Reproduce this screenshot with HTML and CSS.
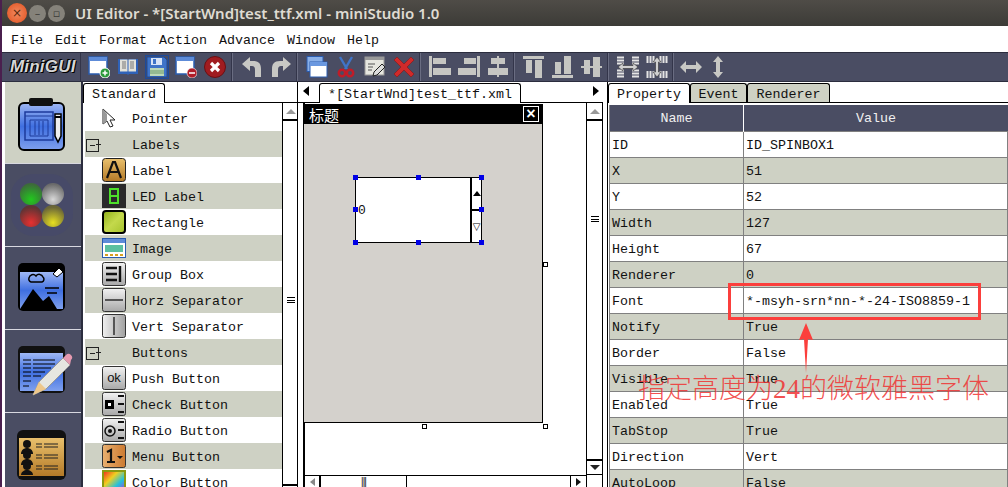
FILE: index.html
```html
<!DOCTYPE html>
<html lang="en">
<head>
<meta charset="utf-8">
<title>UI Editor - miniStudio</title>
<link rel="stylesheet" href="styles.css">
</head>
<body>
<svg class="defs" width="0" height="0" aria-hidden="true">
  <defs>
    <linearGradient id="gBlue" x1="0" y1="0" x2="0" y2="1"><stop offset="0" stop-color="#9fb8f5"/><stop offset=".5" stop-color="#3f6fe0"/><stop offset="1" stop-color="#7fa0ee"/></linearGradient>
    <linearGradient id="gOrange" x1="0" y1="0" x2="0" y2="1"><stop offset="0" stop-color="#e9c06c"/><stop offset="1" stop-color="#b47a28"/></linearGradient>
    <linearGradient id="gGray" x1="0" y1="0" x2="0" y2="1"><stop offset="0" stop-color="#f2f2f2"/><stop offset="1" stop-color="#a8a8a8"/></linearGradient>
    <linearGradient id="gGrayH" x1="0" y1="0" x2="1" y2="0"><stop offset="0" stop-color="#f0f0f0"/><stop offset="1" stop-color="#a0a0a0"/></linearGradient>
    <linearGradient id="gLime" x1="0" y1="0" x2="1" y2="1"><stop offset="0" stop-color="#8fae18"/><stop offset=".5" stop-color="#c4d94c"/><stop offset="1" stop-color="#a5c22c"/></linearGradient>
    <linearGradient id="gMenu" x1="0" y1="0" x2="1" y2="0"><stop offset="0" stop-color="#e8b070"/><stop offset="1" stop-color="#cc7a30"/></linearGradient>
    <linearGradient id="gRain" x1="0" y1="0" x2="1" y2="1"><stop offset="0" stop-color="#f02020"/><stop offset=".35" stop-color="#f0d020"/><stop offset=".65" stop-color="#20c0e0"/><stop offset="1" stop-color="#d020d0"/></linearGradient>
    <radialGradient id="lG" cx=".5" cy=".75" r=".7"><stop offset="0" stop-color="#22c81e"/><stop offset="1" stop-color="#3d6a3a"/></radialGradient>
    <radialGradient id="lW" cx=".5" cy=".75" r=".7"><stop offset="0" stop-color="#d8d8d8"/><stop offset="1" stop-color="#6a6a6a"/></radialGradient>
    <radialGradient id="lR" cx=".5" cy=".8" r=".7"><stop offset="0" stop-color="#e83030"/><stop offset="1" stop-color="#5e3434"/></radialGradient>
    <radialGradient id="lY" cx=".5" cy=".8" r=".7"><stop offset="0" stop-color="#e8e020"/><stop offset="1" stop-color="#6a6638"/></radialGradient>
  </defs>
</svg>
<div class="window">
  <header class="titlebar">
    <span class="dot dot-close">×</span>
    <span class="dot dot-min">–</span>
    <span class="dot dot-max">▫</span>
    <span class="title">UI Editor - *[StartWnd]test_ttf.xml - miniStudio 1.0</span>
  </header>
  <nav class="menubar">
    <span>File</span><span>Edit</span><span>Format</span><span>Action</span><span>Advance</span><span>Window</span><span>Help</span>
  </nav>
  <div class="toolbar">
    <div class="logo">MiniGUI</div>
    <div class="group g-first">
      <span class="tb"><svg width="22" height="22" viewBox="0 0 22 22"><rect x="1" y="1" width="18" height="17" fill="#fff" stroke="#2a5cb0" stroke-width="1.5"/><rect x="1" y="1" width="18" height="4" fill="#5d8bd8"/><circle cx="17" cy="17" r="5" fill="#2a9a3a" stroke="#fff"/><path d="M14.500 17h5M17 14.500v5" stroke="#fff" stroke-width="1.500"/></svg></span>
      <span class="tb"><svg width="22" height="22" viewBox="0 0 22 22"><path d="M1 3h9l1 1 1-1h9v15h-9l-1 1-1-1H1z" fill="#2f62b8"/><path d="M3 3.500h7.500v12H3zM11.500 3.500H19v12h-7.500z" fill="#e2e2da"/><path d="M5 6h4M5 8h4M5 10h4M5 12h4M13 6h4M13 8h4M13 10h4M13 12h4" stroke="#777"/></svg></span>
      <span class="tb tb-on"><svg width="22" height="22" viewBox="0 0 22 22"><path d="M1 1h17l3 3v17H1z" fill="#3f74c8" stroke="#1e4a98"/><rect x="5" y="2" width="11" height="7" fill="#d8e4f6"/><rect x="7" y="3" width="3" height="5" fill="#3f74c8"/><rect x="4" y="12" width="14" height="8" fill="#bcd8b8"/><path d="M4 15h14M4 17h14" stroke="#6a9a6a"/></svg></span>
      <span class="tb"><svg width="22" height="22" viewBox="0 0 22 22"><rect x="1" y="1" width="18" height="17" fill="#fff" stroke="#2a5cb0" stroke-width="1.5"/><rect x="1" y="1" width="18" height="4" fill="#5d8bd8"/><circle cx="17" cy="17" r="5" fill="#b01c28" stroke="#fff" stroke-width=".6"/><path d="M14 17h6" stroke="#fff" stroke-width="1.500"/></svg></span>
      <span class="tb"><svg width="22" height="22" viewBox="0 0 22 22"><circle cx="11" cy="11" r="10.500" fill="#a01c20" stroke="#6a1014"/><path d="M7 7l8 8M15 7l-8 8" stroke="#fff" stroke-width="3.200"/></svg></span>
    </div>
    <div class="group">
      <span class="tb"><svg width="22" height="22" viewBox="0 0 22 22"><path d="M1 8l8-7v4h3c6 0 8 3 8 8v8h-6v-7c0-3-1-4-3-4H9v5z" fill="#c8c8c4"/></svg></span>
      <span class="tb"><svg width="22" height="22" viewBox="0 0 22 22"><path d="M21 8l-8-7v4h-3C4 5 2 8 2 13v8h6v-7c0-3 1-4 3-4h2v5z" fill="#c8c8c4"/></svg></span>
    </div>
    <div class="group">
      <span class="tb"><svg width="22" height="22" viewBox="0 0 22 22"><rect x="1" y="0.500" width="16" height="15" fill="#8ab0e8" stroke="#2a5cb0"/><rect x="4" y="6" width="17" height="15" fill="#fff" stroke="#2a5cb0"/><rect x="4" y="6" width="17" height="4" fill="#6a98e0"/></svg></span>
      <span class="tb"><svg width="22" height="22" viewBox="0 0 22 22"><path d="M5 1l7 12M17 1l-7 12" stroke="#3f74c8" stroke-width="2.400"/><circle cx="7" cy="17" r="3.200" fill="none" stroke="#c01c28" stroke-width="2.500"/><circle cx="15" cy="17" r="3.200" fill="none" stroke="#c01c28" stroke-width="2.500"/></svg></span>
      <span class="tb"><svg width="22" height="22" viewBox="0 0 22 22"><rect x="1" y="1" width="19" height="18" fill="#e6e6e0" stroke="#999"/><rect x="1" y="1" width="19" height="3" fill="#999"/><path d="M4 8h7M4 11h5M4 14h4" stroke="#555"/><path d="M9 20l1-4 8-8 3 3-8 8z" fill="#ddd" stroke="#222"/></svg></span>
      <span class="tb"><svg width="22" height="22" viewBox="0 0 22 22"><path d="M1 4l3-3 7 7 7-7 3 3-7 7 7 7-3 3-7-7-7 7-3-3 7-7z" fill="#d02a2a" stroke="#8a1616" stroke-width=".6"/></svg></span>
    </div>
    <div class="group">
      <span class="tb"><svg class="al" width="22" height="22" viewBox="0 0 22 22"><rect x="0" y="0" width="3" height="21"/><rect x="4" y="2" width="13" height="6"/><rect x="4" y="12" width="18" height="7"/></svg></span>
      <span class="tb"><svg class="al" width="22" height="22" viewBox="0 0 22 22"><rect x="19" y="0" width="3" height="21"/><rect x="6" y="2" width="12" height="6"/><rect x="0" y="12" width="18" height="7"/></svg></span>
      <span class="tb"><svg class="al" width="22" height="22" viewBox="0 0 22 22"><rect x="10" y="0" width="2" height="21"/><rect x="4" y="2" width="14" height="6"/><rect x="1" y="12" width="20" height="7"/></svg></span>
    </div>
    <div class="group">
      <span class="tb"><svg class="al" width="22" height="22" viewBox="0 0 22 22"><rect x="0" y="0" width="21" height="3"/><rect x="3" y="4" width="6" height="13"/><rect x="12" y="4" width="7" height="18"/></svg></span>
      <span class="tb"><svg class="al" width="22" height="22" viewBox="0 0 22 22"><rect x="0" y="19" width="21" height="3"/><rect x="3" y="6" width="6" height="12"/><rect x="12" y="0" width="7" height="18"/></svg></span>
      <span class="tb"><svg class="al" width="22" height="22" viewBox="0 0 22 22"><rect x="0" y="10" width="21" height="2"/><rect x="3" y="4" width="6" height="14"/><rect x="12" y="1" width="7" height="20"/></svg></span>
    </div>
    <div class="group">
      <span class="tb"><svg width="22" height="22" viewBox="0 0 22 22"><path d="M0 1.500h7M0 4.500h7M0 7.500h7M0 14.500h7M0 17.500h7M0 20.500h7M15 1.500h7M15 4.500h7M15 7.500h7M15 14.500h7M15 17.500h7M15 20.500h7" stroke="#e4e4e4" stroke-width="2"/><path d="M1 11l5-4v2.500h10V7l5 4-5 4v-2.500H6V15z" fill="#d0d0d0" stroke="#333" stroke-width=".6"/></svg></span>
      <span class="tb"><svg width="22" height="22" viewBox="0 0 22 22"><path d="M1.500 0v7M4.500 0v7M7.500 0v7M14.500 0v7M17.500 0v7M20.500 0v7M1.500 15v7M4.500 15v7M7.500 15v7M14.500 15v7M17.500 15v7M20.500 15v7" stroke="#e4e4e4" stroke-width="2"/><path d="M11 1l4 5h-2.500v10H15l-4 5-4-5h2.500V6H7z" fill="#d0d0d0" stroke="#333" stroke-width=".6"/></svg></span>
    </div>
    <div class="group g-last">
      <span class="tb tb-narrow"><svg width="22" height="22" viewBox="0 0 22 22"><path d="M0 11l6-6v4h10V5l6 6-6 6v-4H6v4z" fill="#c8c8c4"/></svg></span>
      <span class="tb tb-narrow"><svg width="22" height="22" viewBox="0 0 22 22"><path d="M11 0l5 6h-3v10h3l-5 6-5-6h3V6H6z" fill="#c8c8c4"/></svg></span>
    </div>
  </div>
  <div class="main">
    <aside class="sidebar">
      <div class="side-item side-on"><svg width="50" height="56" viewBox="0 0 50 56"><rect x="2" y="6" width="45" height="47" rx="5" fill="url(#gBlue)" stroke="#000" stroke-width="2"/><rect x="12" y="1" width="24" height="8" rx="2" fill="#111"/><rect x="8" y="15" width="28" height="28" fill="none" stroke="#1c3a9a" stroke-width="1.500"/><path d="M8 19h28M13 23v16h18V23zM18 24v14M22 24v14M26 24v14" fill="none" stroke="#1c3a9a"/><path d="M38 17h6v22l-3 6-3-6z" fill="#eee" stroke="#000" stroke-width="1.500"/><path d="M38 20h6" stroke="#000" stroke-width="2"/></svg></div>
      <div class="side-item"><svg width="62" height="62" viewBox="0 0 62 62"><rect x="0" y="0" width="62" height="62" rx="22" fill="#474a68"/><circle cx="20" cy="20" r="11" fill="url(#lG)"/><circle cx="42" cy="20" r="11" fill="url(#lW)"/><circle cx="20" cy="42" r="11" fill="url(#lR)"/><circle cx="42" cy="42" r="11" fill="url(#lY)"/></svg></div>
      <div class="side-item"><svg width="50" height="52" viewBox="0 0 50 52"><rect x="1" y="1" width="47" height="48" rx="5" fill="#000"/><rect x="3" y="10" width="43" height="37" fill="url(#gBlue)"/><path d="M3 47l13-20 10 12 6-5 8 13z" fill="#000"/><path d="M12 16a4 4 0 0 1 7-2 4 4 0 0 1 7 1 3 3 0 0 1-1 5H14a3 3 0 0 1-2-4z" fill="none" stroke="#000" stroke-width="1.500"/><path d="M28 26h14M30 31h10" stroke="#000" stroke-width="1.500"/><path d="M36 12l6-6 4 4-6 5z" fill="#fff" stroke="#000"/></svg></div>
      <div class="side-item side-note"><svg width="56" height="52" viewBox="0 0 56 52"><rect x="1" y="1" width="47" height="47" rx="5" fill="#111"/><rect x="3" y="8" width="43" height="38" fill="url(#gBlue)"/><path d="M6 15h8M16 15h22M6 19h8M16 19h22M6 23h8M16 23h18M6 27h8M16 27h12M6 31h8M16 31h8M6 36h8M6 41h6" stroke="#000" stroke-width="1.200"/><path d="M16 50l6-13 24-24 7 7-24 24z" fill="#e6e6e0" stroke="#999"/><path d="M46 13l3-3a3 3 0 0 1 5 5l-1 5z" fill="#e59ab0"/><path d="M16 50l6-13 7 7z" fill="#eec78a"/></svg></div>
      <div class="side-item"><svg width="52" height="52" viewBox="0 0 52 52"><rect x="1" y="1" width="49" height="50" rx="6" fill="#111"/><rect x="3" y="9" width="45" height="38" fill="url(#gOrange)"/><g fill="#111"><circle cx="11" cy="15" r="4"/><path d="M5 25c0-4 3-6 6-6s6 2 6 6z"/><circle cx="11" cy="26" r="4"/><path d="M5 36c0-4 3-6 6-6s6 2 6 6z"/><circle cx="11" cy="37" r="4"/><path d="M5 46c0-3 3-5 6-5s6 2 6 5z"/></g><path d="M20 15h6M28 15h14M20 18h6M28 18h14M20 26h6M28 26h14M20 29h6M28 29h14M20 37h6M28 37h14M20 40h6M28 40h14" stroke="#222" stroke-width="1.200"/></svg></div>
    </aside>

    <section class="palette">
      <div class="tabstrip tabstrip-pal"><span class="tab tab-on tab-std">Standard</span></div>
      <div class="pane">
        <div class="list">
          <div class="row"><span class="ic"><svg width="14" height="20" viewBox="0 0 14 20"><path d="M1 1v15l4-3 3 6 3-1-3-6h5z" fill="#fff" stroke="#222"/><path d="M1 1v15l4-3V6z" fill="#999"/></svg></span>Pointer</div>
          <div class="row alt"><span class="ic"><i class="tree"></i></span>Labels</div>
          <div class="row"><span class="ic"><svg class="pi" width="24" height="24" viewBox="0 0 24 24"><rect x=".5" y=".5" width="23" height="23" rx="3" fill="url(#gOrange)" stroke="#222"/><path d="M5 20L11 4h2l6 16M8 14h8" fill="none" stroke="#111" stroke-width="2.200"/></svg></span>Label</div>
          <div class="row alt"><span class="ic"><svg class="pi" width="24" height="24" viewBox="0 0 24 24"><rect width="24" height="24" fill="#2a2a2a"/><path d="M8 5h8v14H8zM8 12h8" fill="none" stroke="#4de02a" stroke-width="2"/></svg></span>LED Label</div>
          <div class="row"><span class="ic"><svg class="pi" width="24" height="24" viewBox="0 0 24 24"><rect x="1" y="1" width="22" height="22" rx="3" fill="url(#gLime)" stroke="#000" stroke-width="2"/></svg></span>Rectangle</div>
          <div class="row alt"><span class="ic"><svg class="pi" width="24" height="20" viewBox="0 0 24 20"><rect x=".5" y=".5" width="23" height="19" fill="#fff" stroke="#2a5cb0"/><rect x="1" y="1" width="22" height="4" fill="#5d8bd8"/><rect x="3" y="7" width="18" height="7" fill="#5cc0a0"/><path d="M3 17h3M8 17h3M13 17h3M18 17h3" stroke="#d8a020" stroke-width="2"/></svg></span>Image</div>
          <div class="row"><span class="ic"><svg class="pi" width="24" height="24" viewBox="0 0 24 24"><rect x=".5" y=".5" width="23" height="23" rx="2" fill="url(#gGray)" stroke="#333"/><path d="M4 6h11M4 12h11M4 18h11M18 4v16" stroke="#111" stroke-width="2.400"/></svg></span>Group Box</div>
          <div class="row alt"><span class="ic"><svg class="pi" width="24" height="24" viewBox="0 0 24 24"><rect x=".5" y=".5" width="23" height="23" rx="2" fill="url(#gGray)" stroke="#333"/><path d="M3 12h18" stroke="#555" stroke-width="2"/></svg></span>Horz Separator</div>
          <div class="row"><span class="ic"><svg class="pi" width="24" height="24" viewBox="0 0 24 24"><rect x=".5" y=".5" width="23" height="23" rx="2" fill="url(#gGrayH)" stroke="#333"/><path d="M12 3v18" stroke="#555" stroke-width="2"/></svg></span>Vert Separator</div>
          <div class="row alt"><span class="ic"><i class="tree"></i></span>Buttons</div>
          <div class="row"><span class="ic"><svg class="pi" width="24" height="24" viewBox="0 0 24 24"><rect x=".5" y=".5" width="23" height="23" rx="2" fill="url(#gGray)" stroke="#333"/><text x="12" y="16" text-anchor="middle" class="ok">ok</text></svg></span>Push Button</div>
          <div class="row alt"><span class="ic"><svg class="pi" width="24" height="24" viewBox="0 0 24 24"><rect x=".5" y=".5" width="23" height="23" rx="2" fill="url(#gGray)" stroke="#333"/><rect x="3" y="8" width="9" height="9" fill="#000"/><rect x="6" y="11" width="3" height="3" fill="#fff"/><path d="M16 4h6M16 12h6M16 20h6" stroke="#111" stroke-width="2"/></svg></span>Check Button</div>
          <div class="row"><span class="ic"><svg class="pi" width="24" height="24" viewBox="0 0 24 24"><rect x=".5" y=".5" width="23" height="23" rx="2" fill="url(#gGray)" stroke="#333"/><circle cx="8" cy="13" r="5" fill="none" stroke="#111" stroke-width="1.500"/><circle cx="8" cy="13" r="2" fill="#111"/><path d="M16 4h6M16 12h6M16 20h6" stroke="#111" stroke-width="2"/></svg></span>Radio Button</div>
          <div class="row alt"><span class="ic"><svg class="pi" width="24" height="24" viewBox="0 0 24 24"><rect x=".5" y=".5" width="23" height="23" rx="2" fill="url(#gMenu)" stroke="#333"/><path d="M5 8l4-2v12M5 18h8" fill="none" stroke="#111" stroke-width="2.200"/><path d="M15 12h6l-3 3z" fill="#111"/></svg></span>Menu Button</div>
          <div class="row"><span class="ic"><svg class="pi" width="24" height="24" viewBox="0 0 24 24"><rect x="1" y="1" width="22" height="22" fill="url(#gRain)" stroke="#8a9a10" stroke-width="2"/></svg></span>Color Button</div>
        </div>
        <div class="vscroll"><span class="btn-up"></span><span class="grip"></span><span class="btn-down"></span></div>
      </div>
    </section>

    <section class="editor">
      <div class="tabstrip tabstrip-ed"><span class="arrow-l"></span><span class="tab tab-on tab-file">*[StartWnd]test_ttf.xml</span><span class="arrow-r"></span></div>
      <div class="ed-pane">
        <div class="ed-col">
          <div class="canvas">
            <div class="form">
              <div class="form-title"><span class="cjk">标题</span><span class="close-x">×</span></div>
              <div class="spin">
                <div class="spin-val">0</div>
                <div class="spin-btns"><span class="spin-up"></span><span class="spin-dn"></span></div>
                <i class="h h1"></i><i class="h h2"></i><i class="h h3"></i><i class="h h4"></i><i class="h h5"></i><i class="h h6"></i><i class="h h7"></i><i class="h h8"></i>
              </div>
              <i class="s s1"></i><i class="s s2"></i><i class="s s3"></i>
            </div>
          </div>
          <div class="hscroll"><span class="hb-l"></span><span class="hb-thumb"><b>|||</b></span><span class="hb-track"></span><span class="hb-r"></span></div>
        </div>
        <div class="vscroll vscroll-ed"><span class="btn-up"></span><span class="grip grip-ed"></span><span class="btn-down"></span></div>
      </div>
    </section>

    <section class="props">
      <div class="tabstrip tabstrip-pr"><span class="tab tab-on tab-prop">Property</span><span class="tab tab-ev">Event</span><span class="tab tab-rn">Renderer</span></div>
      <div class="ptable">
        <div class="phead"><span>Name</span><span>Value</span></div>
        <div class="prow"><span>ID</span><span>ID_SPINBOX1</span></div>
        <div class="prow alt"><span>X</span><span>51</span></div>
        <div class="prow"><span>Y</span><span>52</span></div>
        <div class="prow alt"><span>Width</span><span>127</span></div>
        <div class="prow"><span>Height</span><span>67</span></div>
        <div class="prow alt"><span>Renderer</span><span>0</span></div>
        <div class="prow"><span>Font</span><span>*-msyh-srn*nn-*-24-ISO8859-1</span></div>
        <div class="prow alt"><span>Notify</span><span>True</span></div>
        <div class="prow"><span>Border</span><span>False</span></div>
        <div class="prow alt"><span>Visible</span><span>True</span></div>
        <div class="prow"><span>Enabled</span><span>True</span></div>
        <div class="prow alt"><span>TabStop</span><span>True</span></div>
        <div class="prow"><span>Direction</span><span>Vert</span></div>
        <div class="prow alt"><span>AutoLoop</span><span>False</span></div>
      </div>
    </section>
  </div>
  <div class="note-box"></div>
  <svg class="note-arrow" width="16" height="50" viewBox="0 0 16 50"><path d="M8 0l7 17-5-1-2 34-2-34-5 1z" fill="#fb3f3c"/></svg>
  <div class="note-text">指定高度为<span class="note-num">24</span>的微软雅黑字体</div>
</div>
</body>
</html>
```
FILE: styles.css
```css
* { box-sizing: border-box; }
html, body { margin: 0; padding: 0; height: 100%; overflow: hidden; }
body { background: #4a1f4e; font-family: "Liberation Mono", monospace; font-size: 13.33px; color: #111; }
.defs { position: absolute; }
.window { position: relative; width: 1006px; height: 487px; margin-left: 2px; display: flex; flex-direction: column; background: #fff; overflow: hidden; }

.titlebar { height: 26px; flex: none; display: flex; align-items: center; background: linear-gradient(#4f4c47, #3c3b37); padding-left: 5px; }
.dot { border-radius: 50%; display: flex; align-items: center; justify-content: center; flex: none; font-family: "DejaVu Sans", sans-serif; }
.dot-close { width: 20px; height: 20px; background: radial-gradient(#f08a60, #e2501e); color: #5a2a10; font-size: 12px; }
.dot-min { width: 17px; height: 17px; margin-left: 2px; background: #85827a; color: #3c3b37; font-size: 11px; }
.dot-max { width: 17px; height: 17px; margin-left: 2px; background: #85827a; color: #3c3b37; font-size: 11px; }
.title { margin-left: 10px; color: #dfdbd2; font: 600 15px "Noto Sans", sans-serif; white-space: pre; }

.menubar { height: 26px; flex: none; display: flex; align-items: center; padding: 2px 0 0 9px; gap: 12px; background: #fff; }

.toolbar { height: 30px; flex: none; display: flex; align-items: center; background: #4a4d63; border-top: 1px solid #2b2d3e; border-bottom: 1px solid #2b2d3e; }
.logo { width: 79px; height: 28px; flex: none; border-right: 1px solid #33354a; display: flex; align-items: center; padding-left: 8px; font: italic bold 17px "Liberation Sans", sans-serif; letter-spacing: .2px; color: #d6d6d6; text-shadow: 0 0 1px #000, 1px 1px 0 #000, -1px -1px 0 #000; }
.group { display: flex; height: 28px; align-items: center; padding: 0 1px 0 5px; border-right: 1px solid #33354a; box-shadow: 1px 0 0 #6a6d82; flex: none; }
.g-first { padding-left: 3px; padding-right: 2px; }
.g-last { border-right: 0; box-shadow: none; padding-left: 4px; }
.tb { width: 29px; height: 24px; display: flex; align-items: center; justify-content: center; flex: none; }
.tb-narrow { width: 27px; }
.tb-on svg { outline: 1px solid #1e4a98; }
.al { fill: #c6c6c2; }

.main { flex: 1; min-height: 0; display: flex; background: #fff; }
.sidebar { width: 78px; margin-left: 3px; flex: none; background: #4a4d63; border-right: 2px solid #2b2d3e; display: flex; flex-direction: column; }
.side-item { height: 83px; flex: none; display: flex; align-items: center; justify-content: center; border-bottom: 1px solid #d8d8e0; padding-right: 2px; }
.side-on { background: #ced1c4; height: 82px; padding-top: 4px; }
.side-note { padding-left: 5px; }
.side-item:last-child { border-bottom: 0; }

.tabstrip { height: 21px; flex: none; display: flex; align-items: flex-end; border-bottom: 1px solid #000; position: relative; padding-top: 2px; }
.tab { height: 19px; border: 1px solid #000; border-bottom: 0; border-radius: 3px 3px 0 0; display: flex; align-items: center; justify-content: center; background: #ced1c4; flex: none; padding-top: 2px; }
.tab-on { background: #fff; height: 20px; margin-bottom: -1px; }
.tab-std { width: 82px; }
.tab-file { width: 202px; margin-left: 16px; }
.tab-prop { width: 82px; margin-left: 1px; }
.tab-ev { width: 57px; }
.tab-rn { width: 83px; }

.palette { width: 215px; flex: none; border-right: 1px solid #000; display: flex; flex-direction: column; }
.pane { flex: 1; min-height: 0; display: flex; }
.list { width: 199px; flex: none; padding: 2px 0 0 2px; overflow: hidden; }
.row { height: 26px; display: flex; align-items: center; white-space: pre; padding-top: 2px; }
.alt { background: #ced1c4; }
.ic { width: 47px; height: 26px; flex: none; padding-left: 17px; display: flex; align-items: center; margin-top: -2px; }
.tree { display: block; width: 15px; height: 11px; margin-left: -16px; background: linear-gradient(#222, #222) right 5px / 5px 1px no-repeat; position: relative; }
.tree::before { content: ""; position: absolute; left: 0; top: 0; width: 11px; height: 11px; border: 1px solid #222; background: linear-gradient(#222, #222) center / 5px 1px no-repeat; }
.ok { font: 13px "Liberation Sans", sans-serif; fill: #111; }

.vscroll { width: 16px; flex: none; border-left: 1px solid #000; display: flex; flex-direction: column; align-items: center; position: relative; }
.btn-up { width: 100%; height: 18px; border-bottom: 2px solid #000; flex: none; display: flex; align-items: center; justify-content: center; }
.btn-up::after { content: ""; display: block; width: 0; height: 0; border-style: solid; border-width: 0 5px 5px; border-color: transparent transparent #999; }
.btn-down { position: absolute; left: 0; top: 381px; width: 100%; height: 16px; border-top: 2px solid #000; display: flex; align-items: center; justify-content: center; }
.btn-down::after { content: ""; display: block; width: 0; height: 0; border-style: solid; border-width: 5px 5px 0; border-color: #222 transparent transparent; }
.grip { position: absolute; top: 194px; width: 8px; height: 6px; border-top: 1px solid #000; border-bottom: 1px solid #000; background: linear-gradient(#000, #000) center / 100% 1px no-repeat; }

.editor { width: 300px; flex: none; margin-left: 5px; display: flex; flex-direction: column; }
.tabstrip-ed { margin-left: -5px; }
.arrow-l, .arrow-r { position: absolute; top: 4px; width: 0; height: 0; border: 5px solid transparent; }
.arrow-l { left: 5px; border-left: 0; border-right: 6px solid #000; }
.arrow-r { right: 4px; border-right: 0; border-left: 6px solid #000; }
.tabstrip-ed .tab-file { margin-left: 21px; }
.ed-pane { flex: 1; min-height: 0; display: flex; border-left: 2px solid #000; border-right: 1px solid #000; }
.ed-col { flex: 1; min-width: 0; display: flex; flex-direction: column; }
.canvas { flex: 1; position: relative; min-height: 0; }
.vscroll-ed { width: 16px; }
.grip-ed { top: 113px; }
.vscroll-ed .btn-down { top: 356px; border-bottom: 1px solid #000; }

.form { position: absolute; left: -1px; top: 1px; width: 239px; height: 319px; background: #d4d1cc; border-right: 1px solid #000; border-bottom: 1px solid #000; }
.form-title { height: 20px; background: #000; color: #fff; display: flex; align-items: center; justify-content: space-between; padding: 0 3px 0 5px; }
.cjk { font: 15px "Noto Sans CJK SC", sans-serif; }
.close-x { width: 16px; height: 16px; border: 1px solid #fff; display: flex; align-items: center; justify-content: center; font: bold 16px "Liberation Sans", sans-serif; }
.spin { position: absolute; left: 51px; top: 73px; width: 127px; height: 66px; display: flex; background: #fff; border: 1px solid #000; }
.spin-val { width: 114px; padding-top: 25px; padding-left: 2px; font-size: 13px; }
.spin-btns { flex: 1; border-left: 2px solid #000; display: flex; flex-direction: column; }
.spin-up, .spin-dn { flex: 1; display: flex; align-items: center; justify-content: center; }
.spin-up { border-bottom: 2px solid #000; }
.spin-up::after { content: ""; display: block; width: 0; height: 0; border-style: solid; border-width: 0 4px 5px; border-color: transparent transparent #000; }
.spin-dn::after { content: "▽"; font: 10px "DejaVu Sans", sans-serif; color: #000; }
.h { position: absolute; width: 5px; height: 5px; background: #0000e6; }
.h1 { left: -3px; top: -3px; }
.h2 { left: 60px; top: -3px; }
.h3 { left: 123px; top: -3px; }
.h4 { left: -3px; top: 29px; }
.h5 { left: 123px; top: 29px; }
.h6 { left: -3px; top: 62px; }
.h7 { left: 60px; top: 62px; }
.h8 { left: 123px; top: 62px; }
.s { position: absolute; width: 5px; height: 5px; background: #fff; border: 1px solid #000; }
.s1 { left: 239px; top: 158px; }
.s2 { left: 118px; top: 320px; }
.s3 { left: 239px; top: 320px; }

.hscroll { height: 12px; flex: none; display: flex; border-top: 1px solid #000; }
.hb-l, .hb-r { width: 14px; flex: none; display: flex; align-items: center; justify-content: center; }
.hb-r { width: 16px; }
.hb-l::after { content: ""; display: block; width: 0; height: 0; border-style: solid; border-width: 4px 5px 4px 0; border-color: transparent #888 transparent transparent; }
.hb-r::after { content: ""; display: block; width: 0; height: 0; border-style: solid; border-width: 4px 0 4px 5px; border-color: transparent transparent transparent #111; }
.hb-thumb { width: 88px; flex: none; border-left: 2px solid #000; border-right: 1px solid #000; text-align: center; font: 10px/12px "Liberation Sans", sans-serif; }
.hb-thumb b { font-weight: 400; letter-spacing: -1px; }
.hb-track { flex: 1; }
.hb-r { border-left: 1px solid #000; }

.props { flex: 1; min-width: 0; margin-left: 4px; border-left: 1px solid #000; display: flex; flex-direction: column; }
.tabstrip-pr .tab-prop { margin-left: 0; }
.ptable { padding: 2px 0 0 1px; flex: 1; min-height: 0; overflow: hidden; }
.phead { height: 26px; display: grid; grid-template-columns: 133px 1fr; background: #4a4d63; color: #f0f0f0; text-align: center; line-height: 27px; border-left: 1px solid #808080; }
.phead span + span { border-left: 1px solid #fff; }
.prow { height: 26px; display: grid; grid-template-columns: 133px 1fr; align-items: center; border-top: 1px solid #808080; border-left: 1px solid #808080; border-right: 1px solid #808080; line-height: 27px; }
.prow span { padding-left: 2px; height: 25px; }
.prow span + span { border-left: 1px solid #808080; }

.note-box { position: absolute; left: 726px; top: 283px; width: 253px; height: 37px; border: 3px solid #fb3f3c; }
.note-arrow { position: absolute; left: 796px; top: 323px; }
.note-text { position: absolute; left: 636px; top: 368px; font: 300 27px/38px "Noto Sans CJK SC", sans-serif; color: rgba(240, 50, 50, .85); white-space: pre; }
.note-num { font-family: "Liberation Serif", serif; font-weight: 400; }
```
